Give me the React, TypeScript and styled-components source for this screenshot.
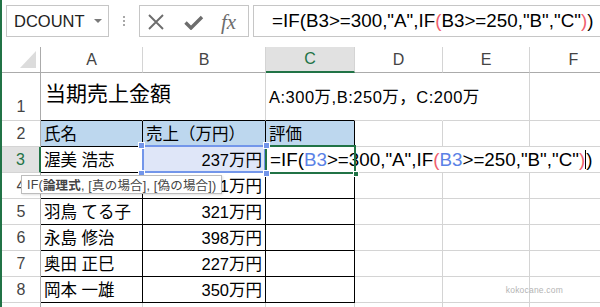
import React from 'react';
import styled, { createGlobalStyle, css } from 'styled-components';

const GREEN = '#217346';
const GRID = '#d4d4d4';
const HEAD_LINE = '#ababab';
const REF_BLUE = '#5b82e6';
const RANGE_BLUE = '#7396ea';
const PAREN_RED = '#f0606e';

const GlobalStyle = createGlobalStyle`
  html, body { margin: 0; padding: 0; background: #fff; overflow: hidden; }
  body { font-family: "Liberation Sans", "Noto Sans CJK JP", sans-serif; }
  * { box-sizing: border-box; }
`;

const Frame = styled.div`
  position: relative;
  width: 600px;
  height: 307px;
  overflow: hidden;
  border-left: 2px solid ${GREEN};
  background: #fff;
`;

const TopBar = styled.div`
  display: flex;
  align-items: flex-start;
  height: 47px;
  padding: 5px 0 0 4px;
`;

const NameBox = styled.div`
  width: 103px;
  height: 32px;
  border: 1px solid #c6c6c6;
  display: flex;
  align-items: center;
  justify-content: space-between;
  padding: 0 6px 0 7px;
  font-size: 16.5px;
  color: #222;
`;

const DropArrow = styled.span`
  width: 0;
  height: 0;
  border-left: 4px solid transparent;
  border-right: 4px solid transparent;
  border-top: 4px solid #7a7a7a;
`;

const Grip = styled.div`
  width: 30px;
  height: 32px;
  display: flex;
  flex-direction: column;
  align-items: center;
  justify-content: center;
  gap: 2px;
`;

const GripDot = styled.span`
  width: 2px;
  height: 2px;
  background: #a8a8a8;
`;

const FuncBox = styled.div`
  width: 110px;
  height: 32px;
  border: 1px solid #c6c6c6;
  display: flex;
  align-items: center;
  padding: 2px 0 0 8px;
  gap: 20px;
  color: #6d6d6d;
`;

const FxText = styled.span`
  font-family: "Liberation Serif", serif;
  font-style: italic;
  font-size: 21px;
  margin-left: -3px;
  color: #6d6d6d;
  line-height: 1;
`;

const FormulaBox = styled.div`
  flex: 1;
  height: 32px;
  margin-left: 4px;
  border: 1px solid #c6c6c6;
  border-right: none;
  display: flex;
  align-items: center;
  padding-left: 18px;
  font-size: 18.8px;
  white-space: nowrap;
  color: #000;
`;

const Tok = styled.span<{ $c: string }>`
  color: ${(p) => p.$c};
`;

const Sheet = styled.div`
  position: relative;
  display: grid;
  grid-template-columns: 39px 102px 123px 89px 88px 87px 88px;
  grid-template-rows: 26px 48px repeat(8, 26px);
`;

const Corner = styled.div`
  position: relative;
  border-right: 1px solid ${HEAD_LINE};
  border-bottom: 1px solid ${HEAD_LINE};
`;

const CornerTri = styled.svg`
  position: absolute;
  left: 0;
  top: 0;
`;

const ColHeader = styled.div<{ $active?: boolean }>`
  display: flex;
  align-items: center;
  justify-content: center;
  font-size: 16px;
  color: #444;
  border-right: 1px solid ${GRID};
  border-bottom: 1px solid ${HEAD_LINE};
  ${(p) =>
    p.$active &&
    css`
      background: #e1e1e1;
      color: ${GREEN};
      border-bottom: 2px solid ${GREEN};
    `}
`;

const RowHeader = styled.div<{ $active?: boolean; $tall?: boolean }>`
  display: flex;
  justify-content: center;
  align-items: ${(p) => (p.$tall ? 'flex-end' : 'center')};
  padding-bottom: ${(p) => (p.$tall ? '4px' : '0')};
  line-height: 18px;
  font-size: 16px;
  color: #444;
  border-right: 1px solid ${HEAD_LINE};
  border-bottom: 1px solid ${GRID};
  ${(p) =>
    p.$active &&
    css`
      background: #e1e1e1;
      color: ${GREEN};
      border-right: 2px solid ${GREEN};
    `}
`;

type CellProps = {
  $right?: 'grid' | 'black' | 'none';
  $bottom?: 'grid' | 'black';
  $fill?: string;
  $align?: 'left' | 'right';
  $big?: boolean;
};

const Cell = styled.div<CellProps>`
  position: relative;
  display: flex;
  align-items: center;
  justify-content: ${(p) => (p.$align === 'right' ? 'flex-end' : 'flex-start')};
  padding: ${(p) => (p.$big ? '0 3px 5px 4px' : '0 3px')};
  font-size: ${(p) => (p.$big ? '21px' : '16.5px')};
  line-height: 20px;
  white-space: nowrap;
  color: #000;
  background: ${(p) => p.$fill || 'transparent'};
  border-right: ${(p) =>
    p.$right === 'none'
      ? '1px solid transparent'
      : `1px solid ${p.$right === 'black' ? '#000' : GRID}`};
  border-bottom: 1px solid ${(p) => (p.$bottom === 'black' ? '#000' : GRID)};
`;

const WideText = styled.span`
  letter-spacing: 0.5px;
`;

const RangeBox = styled.div`
  position: absolute;
  left: -1px;
  top: -2px;
  right: -1px;
  bottom: -1px;
  border: 2px solid ${RANGE_BLUE};
  z-index: 2;
`;

const Handle = styled.span<{ $x: 'l' | 'r'; $y: 't' | 'b' }>`
  position: absolute;
  width: 7px;
  height: 7px;
  background: ${RANGE_BLUE};
  border: 1px solid #fff;
  z-index: 6;
  ${(p) => (p.$x === 'l' ? 'left: -5px;' : 'right: -5px;')}
  ${(p) => (p.$y === 't' ? 'top: -5px;' : 'bottom: -5px;')}
`;

const ActiveOutline = styled.div`
  position: absolute;
  left: -1px;
  top: -2px;
  right: -2px;
  bottom: -2px;
  border: 2px solid ${GREEN};
  z-index: 4;
`;

const FillHandle = styled.span`
  position: absolute;
  right: -5px;
  bottom: -5px;
  width: 6px;
  height: 6px;
  background: ${GREEN};
  border: 1px solid #fff;
  z-index: 5;
`;

const EditBox = styled.div`
  position: absolute;
  left: 1px;
  top: 0;
  bottom: 0;
  width: 333px;
  background: #fff;
  z-index: 3;
  display: flex;
  align-items: center;
  padding-left: 3px;
  font-size: 18.8px;
  white-space: nowrap;
  color: #000;
`;

const Caret = styled.span`
  display: inline-block;
  width: 1px;
  height: 19px;
  background: #000;
  vertical-align: middle;
`;

const Tooltip = styled.div`
  position: absolute;
  left: 19px;
  top: 175px;
  height: 19px;
  padding: 0 5px;
  border: 1px solid #bdbdbd;
  background: #fff;
  font-size: 12.5px;
  letter-spacing: 0.2px;
  color: #444;
  display: flex;
  align-items: center;
  white-space: nowrap;
  z-index: 8;
  box-shadow: 1px 1px 2px rgba(0, 0, 0, 0.12);
`;

const Bold = styled.b`
  font-weight: 700;
`;

const Watermark = styled.div`
  position: absolute;
  right: 37px;
  bottom: 12px;
  font-size: 8.5px;
  color: #b4b4b4;
  letter-spacing: 0.2px;
  z-index: 7;
`;

const XIcon = () => (
  <svg width="16" height="16" viewBox="0 0 16 16">
    <path d="M1 1 L15 15 M15 1 L1 15" stroke="#6d6d6d" strokeWidth="1.9" fill="none" />
  </svg>
);

const CheckIcon = () => (
  <svg width="20" height="16" viewBox="0 0 20 16">
    <path d="M1.5 8.5 L7 14 L18 3" stroke="#6d6d6d" strokeWidth="3.4" fill="none" />
  </svg>
);

const columns = ['A', 'B', 'C', 'D', 'E', 'F'];

const people: [string, string][] = [
  ['小林 真一', '281万円'],
  ['羽鳥 てる子', '321万円'],
  ['永島 修治', '398万円'],
  ['奥田 正巳', '227万円'],
  ['岡本 一雄', '350万円'],
];

const PlainRest = ({ n }: { n: number }) => (
  <>
    {Array.from({ length: n }).map((_, i) => (
      <Cell key={i} />
    ))}
  </>
);

export default function App() {
  return (
    <>
      <GlobalStyle />
      <Frame>
        <TopBar>
          <NameBox>
            <span>DCOUNT</span>
            <DropArrow />
          </NameBox>
          <Grip>
            <GripDot />
            <GripDot />
            <GripDot />
          </Grip>
          <FuncBox>
            <XIcon />
            <CheckIcon />
            <FxText>fx</FxText>
          </FuncBox>
          <FormulaBox>
            <Tok $c="#000">=IF(B3&gt;=300,"A",IF</Tok>
            <Tok $c={PAREN_RED}>(</Tok>
            <Tok $c="#000">B3&gt;=250,"B","C"</Tok>
            <Tok $c={PAREN_RED}>)</Tok>
            <Tok $c="#000">)</Tok>
          </FormulaBox>
        </TopBar>

        <Sheet>
          <Corner>
            <CornerTri width="38" height="25">
              <polygon points="18,21 34,4 34,21" fill="#dcdcdc" />
            </CornerTri>
          </Corner>
          {columns.map((c) => (
            <ColHeader key={c} $active={c === 'C'}>
              {c}
            </ColHeader>
          ))}

          {/* Row 1 */}
          <RowHeader $tall>1</RowHeader>
          <Cell $right="none" $bottom="black" $big>
            当期売上金額
          </Cell>
          <Cell $bottom="black" />
          <Cell $right="none" $bottom="black">
            <WideText>A:300万,B:250万，C:200万</WideText>
          </Cell>
          <Cell $right="none" />
          <PlainRest n={2} />

          {/* Row 2 */}
          <RowHeader>2</RowHeader>
          <Cell $right="black" $bottom="black" $fill="#bdd7ee">
            氏名
          </Cell>
          <Cell $right="black" $bottom="black" $fill="#bdd7ee">
            売上（万円）
          </Cell>
          <Cell $right="black" $bottom="black" $fill="#bdd7ee">
            評価
          </Cell>
          <PlainRest n={3} />

          {/* Row 3 */}
          <RowHeader $active>3</RowHeader>
          <Cell $right="black" $bottom="black">
            渥美 浩志
          </Cell>
          <Cell $right="black" $bottom="black" $align="right" $fill="#dfe6f8">
            237万円
            <RangeBox />
            <Handle $x="l" $y="t" />
            <Handle $x="r" $y="t" />
            <Handle $x="l" $y="b" />
            <Handle $x="r" $y="b" />
          </Cell>
          <Cell $right="black" $bottom="black">
            <EditBox>
              <Tok $c="#000">=IF(</Tok>
              <Tok $c={REF_BLUE}>B3</Tok>
              <Tok $c="#000">&gt;=300,"A",IF</Tok>
              <Tok $c={PAREN_RED}>(</Tok>
              <Tok $c={REF_BLUE}>B3</Tok>
              <Tok $c="#000">&gt;=250,"B","C"</Tok>
              <Tok $c={PAREN_RED}>)</Tok>
              <Caret />
              <Tok $c="#000">)</Tok>
            </EditBox>
            <ActiveOutline />
            <FillHandle />
          </Cell>
          <PlainRest n={3} />

          {/* Rows 4-8 */}
          {people.map(([name, sales], i) => (
            <React.Fragment key={name}>
              <RowHeader>{i + 4}</RowHeader>
              <Cell $right="black" $bottom="black">
                {name}
              </Cell>
              <Cell $right="black" $bottom="black" $align="right">
                {sales}
              </Cell>
              <Cell $right="black" $bottom="black" />
              <PlainRest n={3} />
            </React.Fragment>
          ))}

          {/* Row 9 (only its top edge is in view) */}
          <RowHeader />
          <PlainRest n={6} />
        </Sheet>

        <Tooltip>
          IF(<Bold>論理式</Bold>, [真の場合], [偽の場合])
        </Tooltip>
        <Watermark>kokocane.com</Watermark>
      </Frame>
    </>
  );
}
